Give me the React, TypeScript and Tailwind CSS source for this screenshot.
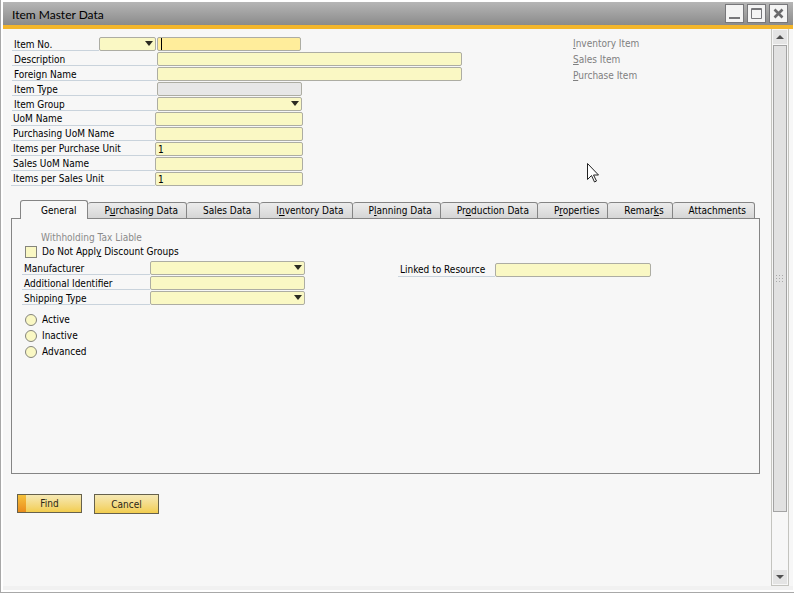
import { useState, type ReactNode } from "react";

const line = "border-[#c9d3dc]";
const fieldBox =
  "block h-[14px] w-full rounded-[2px] border border-[#adada3] px-[2px] text-[10px] leading-[12px] text-black outline-none";

function Label({ id, children, className }: { id: string; children: ReactNode; className: string }) {
  return (
    <label htmlFor={id} className={`block h-[14px] shrink-0 whitespace-nowrap border-b pl-[2px] ${line} ${className}`}>
      {children}
    </label>
  );
}

function TextField({ id, value, className }: { id: string; value?: string; className: string }) {
  return (
    <div className={`shrink-0 ${className}`}>
      <input id={id} type="text" defaultValue={value} className={`${fieldBox} bg-[#faf8c4]`} />
    </div>
  );
}

function SelectField({ id, label, className }: { id: string; label?: string; className: string }) {
  return (
    <div className={`relative shrink-0 ${className}`}>
      <select id={id} aria-label={label} className={`${fieldBox} appearance-none bg-[#faf8c4]`}>
        <option value=""></option>
      </select>
      <svg className="pointer-events-none absolute right-[3px] top-[4px]" width="8" height="5" viewBox="0 0 8 5">
        <path d="M0 0h8L4 5z" fill="#2b2b22" />
      </svg>
    </div>
  );
}

function Row({ children }: { children: ReactNode }) {
  return <div className="flex h-[15px] items-start">{children}</div>;
}

const tabs: { name: string; label: ReactNode }[] = [
  { name: "general", label: "General" },
  { name: "purchasing", label: <>P<u>u</u>rchasing Data</> },
  { name: "sales", label: "Sales Data" },
  { name: "inventory", label: <>I<u>n</u>ventory Data</> },
  { name: "planning", label: <>P<u>l</u>anning Data</> },
  { name: "production", label: <>Pr<u>o</u>duction Data</> },
  { name: "properties", label: <>P<u>r</u>operties</> },
  { name: "remarks", label: <>Remar<u>k</u>s</> },
  { name: "attachments", label: "Attachments" },
];

function TitleBar() {
  const control = "flex h-[19px] w-[19px] items-center justify-center border border-[#77777a] bg-[#f4f4f4]";
  return (
    <header className="flex h-[27px] shrink-0 items-center border-b-4 border-[#f3b62c] bg-linear-to-b from-[#b6b6b6] to-[#8b8b8b] pl-[9px] pr-[5px]">
      <h1 className="flex-1 pt-[2px] font-[Lato,'Open_Sans',sans-serif] text-[12px] leading-[20px] text-black">Item Master Data</h1>
      <div className="flex gap-[3px]">
        <button type="button" aria-label="Minimize" className={control}>
          <svg width="13" height="13" viewBox="0 0 13 13"><path d="M1 11h11" stroke="#77777a" strokeWidth="2" /></svg>
        </button>
        <button type="button" aria-label="Maximize" className={control}>
          <svg width="13" height="13" viewBox="0 0 13 13" fill="none" stroke="#77777a">
            <path d="M1.5 1.5h10v10h-10zM1.5 2.5h10" />
          </svg>
        </button>
        <button type="button" aria-label="Close" className={control}>
          <svg width="13" height="13" viewBox="0 0 13 13"><path d="M2.500 2.500l8 8M10.500 2.500l-8 8" stroke="#6a6a6c" strokeWidth="2.600" /></svg>
        </button>
      </div>
    </header>
  );
}

function ScrollBar() {
  return (
    <div className="mr-[4px] flex w-[18px] shrink-0 flex-col border-x border-b border-[#c4c4bf] bg-[#f7f7f7] px-[1px] pb-[1px] pt-[1px]">
      <button type="button" aria-label="Scroll up" className="flex h-[14px] items-center justify-center bg-[#e4e4e4]">
        <svg width="8" height="4" viewBox="0 0 8 4"><path d="M0 4h8L4 0z" fill="#505050" /></svg>
      </button>
      <div className="flex flex-1 flex-col pb-[58px] pt-[1px]">
        <div className="flex flex-1 items-center justify-center border border-[#a3a3a3] bg-[#e1e1e1]">
          <svg width="8" height="8" viewBox="0 0 8 8" fill="#aaaaaa">
            <path d="M0 0h1v1H0zM3 0h1v1H3zM6 0h1v1H6zM0 3h1v1H0zM3 3h1v1H3zM6 3h1v1H6zM0 6h1v1H0zM3 6h1v1H3zM6 6h1v1H6z" />
          </svg>
        </div>
      </div>
      <button type="button" aria-label="Scroll down" className="flex h-[14px] items-center justify-center bg-[#e4e4e4]">
        <svg width="8" height="4" viewBox="0 0 8 4"><path d="M0 0h8L4 4z" fill="#505050" /></svg>
      </button>
    </div>
  );
}

function ItemHeader() {
  return (
    <section className="flex">
      <div className="w-[562px] shrink-0">
        <div className="pl-[1px] leading-[16px]">
          <Row>
            <Label id="itemNo" className="w-[87px]">Item No.</Label>
            <SelectField id="series" label="Series" className="w-[57px]" />
            <div className="relative ml-[1px] w-[144px]">
              <input id="itemNo" type="text" autoFocus className={`${fieldBox} bg-[#ffed9b] caret-transparent`} />
              <span className="pointer-events-none absolute bottom-[1px] left-[4px] top-[1px] w-px bg-black" />
            </div>
          </Row>
          <Row>
            <Label id="description" className="w-[145px]">Description</Label>
            <TextField id="description" className="w-[305px]" />
          </Row>
          <Row>
            <Label id="foreignName" className="w-[145px]">Foreign Name</Label>
            <TextField id="foreignName" className="w-[305px]" />
          </Row>
          <Row>
            <Label id="itemType" className="w-[145px]">Item Type</Label>
            <div className="w-[145px]">
              <input id="itemType" type="text" disabled className={`${fieldBox} bg-[#e7e7e7]`} />
            </div>
          </Row>
          <Row>
            <Label id="itemGroup" className="w-[145px]">Item Group</Label>
            <SelectField id="itemGroup" className="w-[145px]" />
          </Row>
        </div>
        <div className="leading-[14px]">
          <Row>
            <Label id="uom" className="w-[144px]">UoM Name</Label>
            <TextField id="uom" className="w-[148px]" />
          </Row>
          <Row>
            <Label id="purchasingUom" className="w-[144px]">Purchasing UoM Name</Label>
            <TextField id="purchasingUom" className="w-[148px]" />
          </Row>
          <Row>
            <Label id="perPurchase" className="w-[144px]">Items per Purchase Unit</Label>
            <TextField id="perPurchase" value="1" className="w-[148px]" />
          </Row>
          <Row>
            <Label id="salesUom" className="w-[144px]">Sales UoM Name</Label>
            <TextField id="salesUom" className="w-[148px]" />
          </Row>
          <Row>
            <Label id="perSales" className="w-[144px]">Items per Sales Unit</Label>
            <TextField id="perSales" value="1" className="w-[148px]" />
          </Row>
        </div>
      </div>
      <ul className="text-[#808080]">
        <li className="h-4 leading-[14px]"><u>I</u>nventory Item</li>
        <li className="h-4 leading-[14px]"><u>S</u>ales Item</li>
        <li className="h-4 leading-[14px]"><u>P</u>urchase Item</li>
      </ul>
    </section>
  );
}

function GeneralPanel() {
  return (
    <div role="tabpanel" className="-mt-px h-64 border border-[#858585] pl-[10px] pt-[12px]">
      <p className="pl-[19px] leading-[14px] text-[#8a8a8a]">Withholding Tax Liable</p>
      <label className="flex h-[14px] items-center gap-[5px] pl-[3px] leading-[14px]">
        <input type="checkbox" className="h-[12px] w-[12px] appearance-none border border-[#85857c] bg-[#faf8c4] checked:bg-[#85857c]" />
        <span>Do Not Appl<u>y</u> Discount Groups</span>
      </label>
      <div className="flex items-start pt-[2px] leading-[16px]">
        <div className="w-[376px] shrink-0">
          <Row>
            <Label id="manufacturer" className="w-[128px]">Manufacturer</Label>
            <SelectField id="manufacturer" className="w-[155px]" />
          </Row>
          <Row>
            <Label id="identifier" className="w-[128px]">Additional Identifier</Label>
            <TextField id="identifier" className="w-[155px]" />
          </Row>
          <Row>
            <Label id="shipping" className="w-[128px]">Shipping Type</Label>
            <SelectField id="shipping" className="w-[155px]" />
          </Row>
        </div>
        <div className="flex pt-[2px] leading-[14px]">
          <Label id="resource" className="w-[97px]">Linked to Resource</Label>
          <TextField id="resource" className="w-[156px]" />
        </div>
      </div>
      <div role="radiogroup" aria-label="Status" className="pl-[3px] pt-[6px]">
        {["Active", "Inactive", "Advanced"].map((status) => (
          <label key={status} className="flex h-4 items-center gap-[5px] leading-[14px]">
            <input
              type="radio"
              name="status"
              className="h-[12px] w-[12px] appearance-none rounded-full border border-[#85857c] bg-[#faf8c4] checked:bg-[#85857c]"
            />
            {status}
          </label>
        ))}
      </div>
    </div>
  );
}

export default function App() {
  const [active, setActive] = useState("general");
  const action = "w-[65px] border border-[#66614c] bg-linear-to-b from-[#f6e9b4] to-[#f2cd4d] leading-[17px] text-[#2b2616]";
  return (
    <div className="relative flex min-h-screen flex-col border-b border-l border-[#a8a8a8] bg-white pb-[2px] pl-[2px] pr-[1px] pt-[2px] font-['DejaVu_Sans_Condensed','DejaVu_Sans',sans-serif] text-[10px] text-black">
      <TitleBar />
      <div className="flex flex-1 border-b-4 border-[#f1f1f1] bg-[#f7f7f7]">
        <main className="min-w-0 flex-1 pl-[8px] pr-[11px] pt-[8px]">
          <ItemHeader />
          <div role="tablist" className="relative flex items-end pl-[9px] pt-[13px]">
            {tabs.map((tab) => (
              <button
                key={tab.name}
                type="button"
                role="tab"
                aria-selected={active === tab.name}
                onClick={() => setActive(tab.name)}
                className={
                  active === tab.name
                    ? "h-[19px] whitespace-nowrap rounded-t-[3px] border border-b-0 border-[#858585] bg-[#f7f7f7] pl-[20px] pr-[11px]"
                    : "h-[17px] whitespace-nowrap rounded-t-[3px] border border-l-0 border-[#858585] bg-linear-to-b from-[#ececec] to-[#d6d6d6] pl-[16px] pr-[8px]"
                }
              >
                {tab.label}
              </button>
            ))}
          </div>
          <GeneralPanel />
          <div className="flex items-start gap-3 pl-[6px] pt-[20px]">
            <button type="button" className={`${action} flex h-[19px]`}>
              <span className="h-full w-2 bg-linear-to-b from-[#f5c23c] to-[#ea8c1c]" />
              <span className="flex-1 pr-2">Find</span>
            </button>
            <button type="button" className={`${action} h-[20px]`}>Cancel</button>
          </div>
        </main>
        <ScrollBar />
      </div>
      <svg className="pointer-events-none absolute left-[586px] top-[163px]" width="13" height="20" viewBox="0 0 13 20">
        <path d="M.5.5v16l4-4 3 6.500 2-1-3-6h5z" fill="#fff" stroke="#222" />
      </svg>
    </div>
  );
}
